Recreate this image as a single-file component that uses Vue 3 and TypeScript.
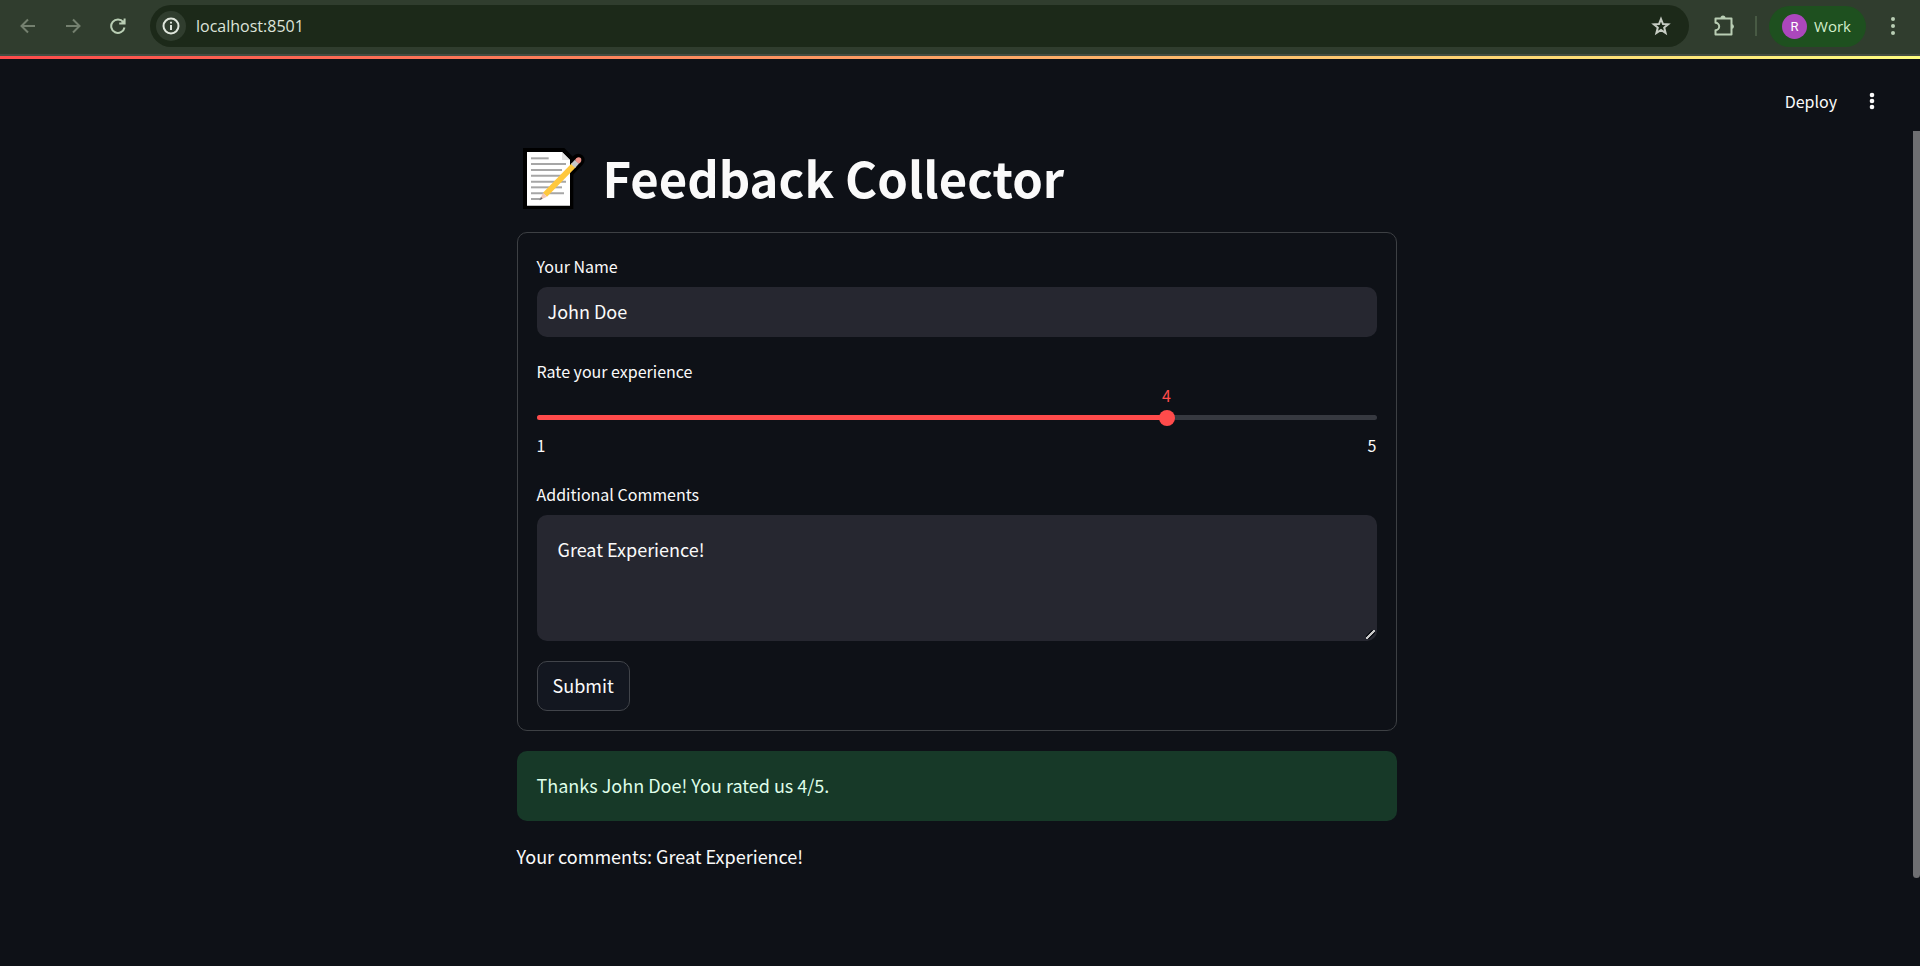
<script setup lang="ts">
import { computed, ref } from 'vue'

const name = ref('John Doe')
const rating = ref(4)
const comments = ref('Great Experience!')
const sent = ref({ name: 'John Doe', rating: 4, comments: 'Great Experience!' })

const percent = computed(() => ((rating.value - 1) / 4) * 100)

function submit() {
  sent.value = { name: name.value, rating: rating.value, comments: comments.value }
}

const paperLines = [
  [55, 101], [72, 153], [90, 141], [107, 153], [125, 153], [142, 141], [160, 147], [177, 76],
]
</script>

<template>
  <div class="window">
    <nav class="toolbar" aria-label="Browser">
      <button class="nav dim" aria-label="Back">
        <svg width="16" height="16" viewBox="0 0 16 16"><path d="M15 8H2M8 1.500L1.500 8L8 14.500" /></svg>
      </button>
      <button class="nav dim" aria-label="Forward">
        <svg width="16" height="16" viewBox="0 0 16 16"><path d="M1 8H14M8 1.500L14.500 8L8 14.500" /></svg>
      </button>
      <button class="nav" aria-label="Reload">
        <svg width="16" height="16" viewBox="0 0 16 16"><path d="M13.300 4.200A6.700 6.700 0 1 0 14.500 9.500M14.600 .500V5.500H9.200" /><path class="solid" d="M15 1V6H10Z" /></svg>
      </button>
      <div class="address">
        <button class="site-info" aria-label="Site information">
          <svg width="18" height="18" viewBox="0 0 18 18"><circle cx="9" cy="9" r="7.500" /><path d="M9 8V13M9 4.800V6.600" /></svg>
        </button>
        <input class="url" aria-label="Address" value="localhost:8501" />
        <button class="star" aria-label="Bookmark">
          <svg width="20" height="20" viewBox="0 0 20 20"><path d="M10 3L12 8L17.200 8.300L13.200 11.600L14.600 17L10 14L5.400 17L6.800 11.600L2.800 8.300L8 8Z" /></svg>
        </button>
      </div>
      <button class="puzzle" aria-label="Extensions">
        <svg width="22" height="22" viewBox="0 0 22 22"><path d="M2.500 3.500H18.500V19.500H2.500V15.200A3.700 3.700 0 0 0 2.500 7.800Z" stroke-linejoin="round" /><path class="solid" d="M7.500 3A2.500 2.500 0 0 1 12.500 3ZM18.500 9A2.500 2.500 0 0 1 18.500 14Z" /></svg>
      </button>
      <span class="divider"></span>
      <button class="profile"><span class="avatar">R</span>Work</button>
      <button class="dots" aria-label="Browser menu">
        <svg width="6" height="20" viewBox="0 0 6 20"><circle cx="3" cy="3" r="2" /><circle cx="3" cy="10" r="2" /><circle cx="3" cy="17" r="2" /></svg>
      </button>
    </nav>
    <div class="decoration"></div>
    <header class="app-header">
      <button class="deploy">Deploy</button>
      <button class="app-menu" aria-label="Main menu">
        <svg width="6" height="18" viewBox="0 0 6 18"><circle cx="3" cy="3" r="2.300" /><circle cx="3" cy="9" r="2.300" /><circle cx="3" cy="15" r="2.300" /></svg>
      </button>
    </header>
    <div class="body">
      <main class="content">
        <h1>
          <svg width="72" height="64" viewBox="6 15 216 192" role="img" aria-label="Memo">
            <path d="M24 24H148L175 52V207H24Z" fill="#000" />
            <path d="M190 60L82 172" stroke="#000" stroke-width="38" stroke-linecap="round" />
            <path d="M36 36H141L165 60V197H36Z" fill="#fff" />
            <path d="M141 36L165 60H141Z" fill="#e3e3e3" />
            <path v-for="[y, end] in paperLines" :key="y" :d="`M48 ${y}H${end}`" stroke="#a6a6a6" stroke-width="6" />
            <path d="M177 75L90 164" stroke="#ffc83d" stroke-width="17" />
            <path d="M96 170L84 158L74 180Z" fill="#f3c6b6" />
            <path d="M78 171L73 181L83 176Z" fill="#636363" />
            <path d="M174 78L186 65" stroke="#c8c8c8" stroke-width="17" />
            <path d="M186 65L191 60" stroke="#f1948a" stroke-width="17" />
            <circle cx="191" cy="60" r="8" fill="#f1948a" />
          </svg>
          Feedback Collector
        </h1>
        <form class="card" @submit.prevent="submit">
          <label for="name">Your Name</label>
          <input id="name" v-model="name" class="field" type="text" />
          <label for="rating">Rate your experience</label>
          <div class="slider">
            <output for="rating" :style="{ left: percent + '%' }">{{ rating }}</output>
            <div class="track"><div class="fill" :style="{ width: percent + '%' }"></div></div>
            <input id="rating" v-model.number="rating" type="range" min="1" max="5" />
          </div>
          <div class="ticks"><span>1</span><span>5</span></div>
          <label for="comments">Additional Comments</label>
          <textarea id="comments" v-model="comments" class="field"></textarea>
          <button class="submit" type="submit">Submit</button>
        </form>
        <div class="alert" role="status">Thanks {{ sent.name }}! You rated us {{ sent.rating }}/5.</div>
        <p>Your comments: {{ sent.comments }}</p>
      </main>
      <div class="scrollbar"><div class="thumb"></div></div>
    </div>
  </div>
</template>

<style>
body { margin: 0; background: #0e1117; }
</style>

<style scoped>
* { box-sizing: border-box; }
.window {
  min-height: 100vh;
  display: flex;
  flex-direction: column;
  background: #0e1117;
  color: #fafafa;
  font-family: "Noto Sans CJK SC", "Noto Sans", sans-serif;
  font-size: 18px;
  line-height: 30px;
}
button, input, textarea { font: inherit; color: inherit; }
button { display: flex; align-items: center; justify-content: center; padding: 0; border: 0; background: none; cursor: pointer; }
svg { display: block; flex: none; }
.toolbar {
  height: 56px;
  padding: 5px 24px 7px 8px;
  display: flex;
  align-items: center;
  background: #303d2e;
  border-bottom: 2px solid #454d43;
  font-family: "Open Sans", sans-serif;
}
.toolbar svg { fill: none; stroke: #b9ceb4; stroke-width: 2; }
.toolbar svg .solid { fill: #b9ceb4; stroke: none; }
.nav { width: 40px; height: 40px; margin-right: 5px; }
.toolbar .nav.dim svg { stroke: #74806f; }
.address {
  flex: 1;
  height: 42px;
  margin-left: 7px;
  padding: 0 18px 0 6px;
  display: flex;
  align-items: center;
  border-radius: 21px;
  background: #1c2919;
}
.site-info { width: 30px; height: 30px; border-radius: 50%; background: #303d2e; }
.toolbar .site-info svg { stroke: #dfe6dc; }
.url { flex: 1; min-width: 0; padding: 0 10px; border: 0; outline: 0; background: none; color: #dce3d9; font-size: 16px; }
.toolbar .star svg { stroke: #c6ccc3; }
.puzzle { margin-left: 24px; }
.divider { width: 2px; height: 20px; margin: 0 12px 0 20px; background: #485a44; }
.profile { height: 41px; padding: 0 15px 0 13px; gap: 7px; border-radius: 21px; background: #1e501f; color: #d4eecb; font-size: 15px; }
.avatar { width: 25px; height: 25px; border-radius: 50%; background: #ab47bc; color: #fff; font-size: 13px; line-height: 25px; font-family: Roboto, sans-serif; }
.dots { margin-left: 24px; }
.toolbar .dots svg { fill: #b9ceb4; stroke: none; }
.decoration { height: 3px; background: linear-gradient(90deg, #ff4b4b, #fffd80); }
.app-header { height: 72px; padding: 12px 45px 0 0; display: flex; justify-content: flex-end; align-items: center; gap: 32px; }
.deploy { font-size: 16px; height: 30px; }
.app-menu { height: 30px; }
.app-menu svg { fill: #fafafa; }
.body { flex: 1; display: flex; }
.content { flex: 1; max-width: 880px; margin: 0 auto; padding-bottom: 60px; }
.scrollbar { width: 7px; }
.thumb { height: 747px; background: #6e6f72; border-radius: 0 0 4px 4px; }
h1 { display: flex; align-items: center; gap: 14px; height: 101px; margin: 0; padding-bottom: 9px; font-size: 49px; font-weight: 700; line-height: 60px; }
.card { padding: 19px; border: 1px solid #3d4044; border-radius: 10px; }
label { display: block; height: 35px; font-size: 16px; line-height: 28px; }
.field { display: block; width: 100%; border: 0; border-radius: 10px; outline: 0; background: #262730; }
input.field { height: 50px; padding: 0 11px 2px; margin-bottom: 20px; }
textarea.field { height: 126px; padding: 19px 21px; resize: vertical; margin-bottom: 20px; }
textarea::-webkit-resizer {
  background: linear-gradient(135deg, transparent 30%, #0e1117 30% 42%, #c8c8c8 42% 58%, #0e1117 58% 68%, transparent 68%) 4px 4px / 9px 9px no-repeat;
}
.slider { position: relative; height: 38px; padding-top: 23px; }
.slider output { position: absolute; top: -12px; transform: translateX(-50%); color: #ff4b4b; font-size: 16px; }
.track { height: 5px; border-radius: 3px; background: #363940; overflow: hidden; }
.fill { height: 100%; background: #ff4b4b; }
.slider input { position: absolute; left: -8px; top: 18px; width: calc(100% + 16px); height: 16px; margin: 0; appearance: none; background: none; }
.slider input::-webkit-slider-thumb { appearance: none; width: 16px; height: 16px; border-radius: 50%; background: #ff4b4b; }
.ticks { display: flex; justify-content: space-between; height: 50px; font-size: 16px; }
.submit { height: 50px; padding: 0 15px 2px; border: 1px solid #41444a; border-radius: 10px; background: #131720; }
.alert { margin: 20px 0; padding: 19px 20px 21px; border-radius: 10px; background: #173928; color: #dffde9; }
p { margin: 0; }
</style>
